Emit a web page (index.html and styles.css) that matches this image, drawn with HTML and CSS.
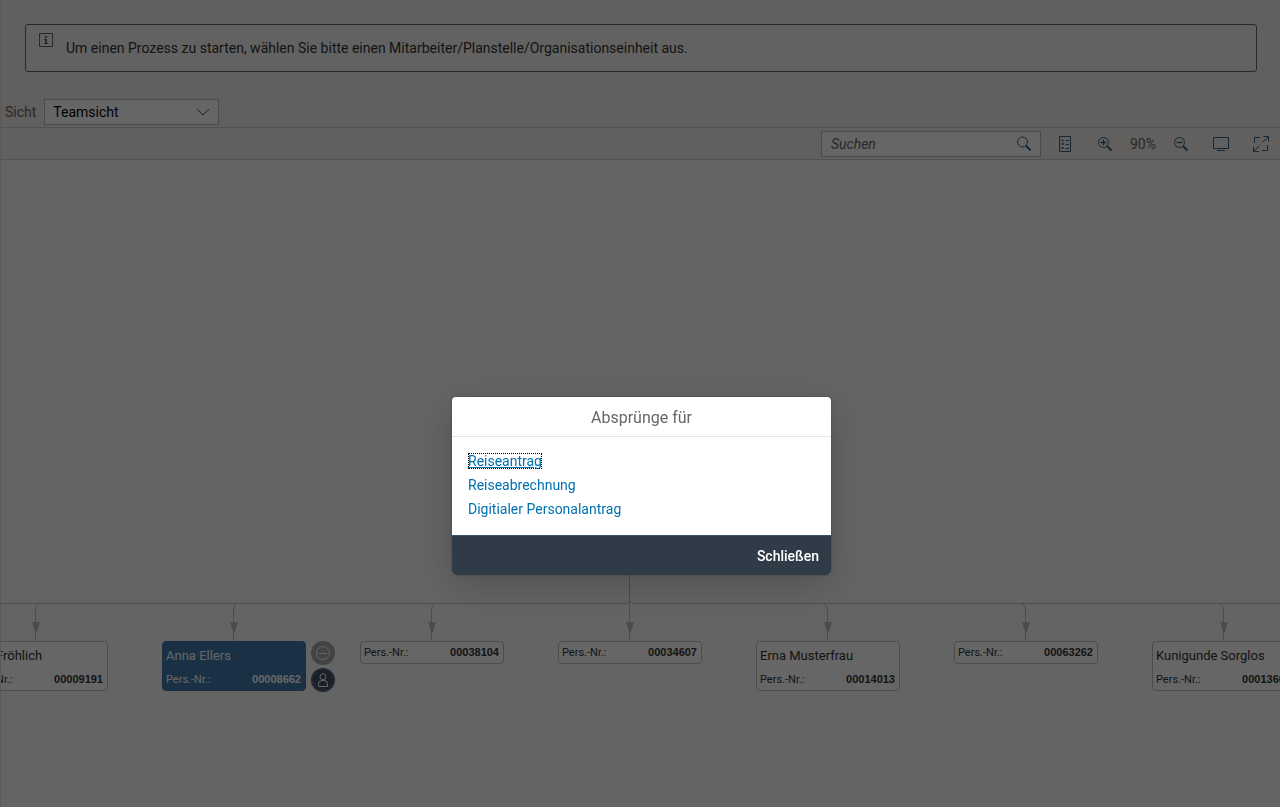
FILE: index.html
```html
<!DOCTYPE html>
<html lang="de">
<head>
<meta charset="utf-8">
<meta name="viewport" content="width=device-width, initial-scale=1">
<title>Teamsicht</title>
<link rel="stylesheet" href="styles.css">
</head>
<body>
<div class="app">
  <header class="page-head">
    <div class="message-strip" role="note">
      <svg class="info-icon" width="16" height="16" viewBox="0 0 16 16" aria-hidden="true"><path d="M1.5 1.5h13v13h-13z" fill="none" stroke="currentColor"/><path d="M7 4h2v2H7zM6 7h3v4h1v1H6v-1h1V8H6z" fill="currentColor"/></svg>
      <p class="message-text">Um einen Prozess zu starten, wählen Sie bitte einen Mitarbeiter/Planstelle/Organisationseinheit aus.</p>
    </div>
    <div class="view-row">
      <label for="view">Sicht</label>
      <div class="select-box">
        <select id="view"><option>Teamsicht</option></select>
        <svg class="chevron" width="14" height="14" viewBox="0 0 14 14" aria-hidden="true"><path d="M1 4l6 6 6-6" fill="none" stroke="currentColor"/></svg>
      </div>
    </div>
  </header>
  <div class="toolbar" role="toolbar">
    <form class="search">
      <input type="search" placeholder="Suchen" aria-label="Suchen">
      <button type="button" class="icon-button search-button" aria-label="Suche starten"><svg width="16" height="16" viewBox="0 0 16 16"><circle cx="6.5" cy="6" r="5" fill="none" stroke="currentColor"/><path d="M10 9.700l4.500 4.500" stroke="currentColor" stroke-width="2"/></svg></button>
    </form>
    <button type="button" class="icon-button" aria-label="Legende"><svg width="16" height="16" viewBox="0 0 16 16"><path d="M2.500.5h11v15h-11z" fill="none" stroke="currentColor"/><path d="M4.500 3.500h2v2h-2zM4.500 7h2v2h-2zM4.500 11h2v2h-2z" fill="currentColor"/><path d="M8.500 4.500H12M8.500 8.500H12M8.500 12.500H12" stroke="currentColor"/></svg></button>
    <button type="button" class="icon-button" aria-label="Vergrößern"><svg width="16" height="16" viewBox="0 0 16 16"><circle cx="6.500" cy="6.500" r="5" fill="none" stroke="currentColor"/><path d="M3.500 6.500h6M6.500 3.500v6" stroke="currentColor" stroke-width="1.300"/><path d="M10.300 10.300l4.200 4.200" stroke="currentColor" stroke-width="2"/></svg></button>
    <span class="zoom-level">90%</span>
    <button type="button" class="icon-button" aria-label="Verkleinern"><svg width="16" height="16" viewBox="0 0 16 16"><circle cx="6.500" cy="6.500" r="5" fill="none" stroke="currentColor"/><path d="M3.500 6.500h6" stroke="currentColor" stroke-width="1.300"/><path d="M10.300 10.300l4.200 4.200" stroke="currentColor" stroke-width="2"/></svg></button>
    <button type="button" class="icon-button" aria-label="Einpassen"><svg width="16" height="16" viewBox="0 0 16 16"><path d="M.5 1.500h15v11H.5zM4 14.500h8" fill="none" stroke="currentColor"/></svg></button>
    <button type="button" class="icon-button" aria-label="Vollbild"><svg width="16" height="16" viewBox="0 0 16 16"><path d="M7 1.500H1.500V7M9 14.500h5.500V9M10.500.5h5v5M15.500.5L9.800 6.200M.5 10.500v5h5M.5 15.500l5.700-5.700" fill="none" stroke="currentColor"/></svg></button>
  </div>
  <main class="canvas">
    <div class="stage">
      <svg class="connectors" width="1332" height="70" viewBox="0 0 1332 70" aria-hidden="true">
        <defs><path id="tip" d="M-4 0h8L1 10h-2z"/></defs>
        <g fill="none" stroke="currentColor">
          <path d="M0 31.500h663l2.500-3 2.500 3h664M665.500 0v70"/>
          <path d="M71.500 70V38q0-5 4-6.500M269.500 70V38q0-5 4-6.500M467.500 70V38q0-5 4-6.500M863.500 70V38q0-5-4-6.500M1061.500 70V38q0-5-4-6.500M1259.500 70V38q0-5-4-6.500"/>
        </g>
        <g fill="currentColor">
          <use href="#tip" x="72" y="50"/><use href="#tip" x="270" y="50"/><use href="#tip" x="468" y="50"/><use href="#tip" x="666" y="50"/><use href="#tip" x="864" y="50"/><use href="#tip" x="1062" y="50"/><use href="#tip" x="1260" y="50"/>
        </g>
      </svg>
      <div class="nodes">
        <article class="node"><h2>Otto Fröhlich</h2><p><span>Pers.-Nr.:</span><b>00009191</b></p></article>
        <article class="node selected"><h2>Anna Ellers</h2><p><span>Pers.-Nr.:</span><b>00008662</b></p>
          <div class="node-actions">
            <button type="button" class="round collapse" aria-label="Zuklappen"><svg width="24" height="24" viewBox="0 0 24 24"><circle cx="12" cy="12" r="6.500" fill="none" stroke="currentColor"/><path d="M8 12.500h8" stroke="currentColor"/></svg></button>
            <button type="button" class="round person" aria-label="Person"><svg width="24" height="24" viewBox="0 0 24 24"><circle cx="12" cy="12" r="11" fill="none" stroke="#8c9299" stroke-dasharray="2 1"/><circle cx="12" cy="8.800" r="3" fill="none" stroke="currentColor"/><path d="M7.500 18.500V16q0-3.500 3.500-3.500h2q3.500 0 3.500 3.500v2.500z" fill="none" stroke="currentColor"/></svg></button>
          </div>
        </article>
        <article class="node"><p><span>Pers.-Nr.:</span><b>00038104</b></p></article>
        <article class="node"><p><span>Pers.-Nr.:</span><b>00034607</b></p></article>
        <article class="node"><h2>Erna Musterfrau</h2><p><span>Pers.-Nr.:</span><b>00014013</b></p></article>
        <article class="node"><p><span>Pers.-Nr.:</span><b>00063262</b></p></article>
        <article class="node"><h2>Kunigunde Sorglos</h2><p><span>Pers.-Nr.:</span><b>00013600</b></p></article>
      </div>
    </div>
  </main>
</div>
<div class="block-layer">
  <section class="dialog" role="dialog" aria-labelledby="dialog-title">
    <h1 id="dialog-title">Absprünge für</h1>
    <ul class="links">
      <li><a class="focused" href="#reiseantrag">Reiseantrag</a></li>
      <li><a href="#reiseabrechnung">Reiseabrechnung</a></li>
      <li><a href="#personalantrag">Digitialer Personalantrag</a></li>
    </ul>
    <footer><button type="button">Schließen</button></footer>
  </section>
</div>
</body>
</html>
```

FILE: styles.css
```css
* { box-sizing: border-box; }

body {
  margin: 0;
  overflow: hidden;
  background: #fafafa;
  color: #333;
  font: 14px/20px Roboto, "Liberation Sans", sans-serif;
}

h1, h2, p, ul { margin: 0; padding: 0; }
button, input, select { font: inherit; color: inherit; }
svg { display: block; }

.app {
  display: flex;
  flex-direction: column;
  height: 100vh;
  border-left: 1px solid #e0e0e0;
}

.page-head {
  padding-top: 24px;
  background: #f5f1eb;
  border-bottom: 1px solid #ccc;
}

.message-strip {
  display: flex;
  gap: 12px;
  min-height: 48px;
  margin: 0 23px 0 24px;
  padding: 7px 12px;
  background: #f4f4f4;
  border: 1px solid #5e6a79;
  border-radius: 3px;
}

.info-icon { color: #5e6a79; }
.message-text { padding-top: 6px; }

.view-row {
  display: flex;
  align-items: center;
  gap: 8px;
  padding: 27px 4px 2px;
}

.view-row label { color: #666; }
.select-box { display: grid; width: 175px; }

.select-box select, .chevron { grid-area: 1 / 1; }

.select-box select {
  appearance: none;
  height: 26px;
  padding: 0 8px;
  background: #fff;
  border: 1px solid #bfbfbf;
  border-radius: 0;
  color: #000;
}

.chevron {
  place-self: center end;
  margin-right: 9px;
  color: #346187;
  pointer-events: none;
}

.toolbar {
  display: flex;
  align-items: center;
  justify-content: flex-end;
  gap: 8px;
  height: 32px;
  padding-right: 3px;
  background: #f5f1eb;
  border-bottom: 1px solid #ccc;
}

.search {
  display: flex;
  width: 220px;
  height: 26px;
  background: #fff;
  border: 1px solid #bfbfbf;
}

.search input {
  flex: 1;
  min-width: 0;
  padding: 0 9px;
  border: 0;
  background: none;
  outline: 0;
}

.search input::placeholder { color: #666; font-style: italic; opacity: 1; }

.icon-button {
  display: grid;
  place-items: center;
  width: 32px;
  height: 26px;
  padding: 0;
  border: 0;
  background: none;
  color: #346187;
}

.search .search-button { height: 24px; }
.zoom-level { min-width: 28px; color: #666; text-align: center; }

.canvas {
  position: relative;
  flex: 1;
  overflow: hidden;
}

.stage {
  position: absolute;
  top: 412px;
  left: -37px;
  width: 1332px;
}

.connectors { color: #bfbfbf; }

.nodes {
  display: grid;
  grid-template-columns: repeat(7, 144px);
  gap: 54px;
  align-items: start;
}

.node {
  position: relative;
  padding: 0 4px 0 3px;
  margin-top: -1px;
  background: #fff;
  border: 1px solid #bfbfbf;
  border-radius: 4px;
}

.node h2 {
  padding: 4px 0 3px;
  font-size: 13px;
  font-weight: 400;
  line-height: 20px;
  white-space: nowrap;
}

.node p {
  display: flex;
  justify-content: space-between;
  font-size: 11px;
  line-height: 21px;
}

.node b { font-family: "Liberation Sans", Arial, sans-serif; }

.node.selected {
  background: #427cac;
  border-color: #427cac;
  color: #fff;
}

.node-actions {
  position: absolute;
  top: -1px;
  left: 148px;
  display: grid;
  gap: 3px;
}

.round {
  width: 24px;
  height: 24px;
  padding: 0;
  border: 0;
  border-radius: 50%;
  color: #fff;
}

.collapse { background: #a5a9ad; }
.person { background: #3f5161; }

.block-layer {
  position: fixed;
  inset: 0;
  display: flex;
  align-items: flex-start;
  justify-content: center;
  padding: 397px 0 0 3px;
  background: rgba(0, 0, 0, 0.6);
}

.dialog {
  width: 379px;
  overflow: hidden;
  background: #fff;
  border-radius: 4px;
  box-shadow: 0 10px 40px rgba(0, 0, 0, 0.2), 0 0 2px rgba(0, 0, 0, 0.4);
}

.dialog h1 {
  height: 40px;
  border-bottom: 1px solid #e5e5e5;
  color: #666;
  font-size: 16px;
  font-weight: 400;
  line-height: 42px;
  text-align: center;
}

.links {
  padding: 12px 16px 14px;
  list-style: none;
  line-height: 24px;
}

.links a { color: #0070b1; text-decoration: none; }

.links .focused {
  outline: 1px dotted #000;
  outline-offset: -1px;
  text-decoration: underline;
}

.dialog footer {
  display: flex;
  justify-content: flex-end;
  height: 40px;
  padding: 0 12px;
  background: #2f3c48;
  border-top: 1px solid #3d5568;
}

.dialog footer button {
  padding: 0;
  border: 0;
  background: none;
  color: #fff;
  font-weight: 500;
}
```
